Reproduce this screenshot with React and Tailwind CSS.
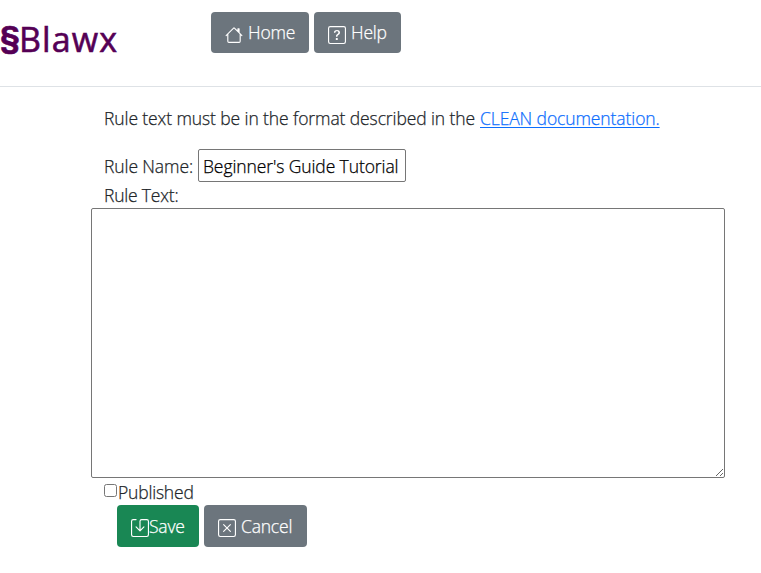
import { BsHouse, BsQuestionSquare, BsSave, BsXSquare } from "react-icons/bs";

const btn = "flex items-center rounded-[4px] text-white pl-[14px] pb-px whitespace-nowrap tracking-[-0.2px]";

export default function App() {
  return (
    <div className="w-[761px] h-[573px] overflow-hidden bg-white font-['Open_Sans','Noto_Sans',sans-serif] text-[17.5px] leading-[26px] text-[#212529] font-light tracking-[-0.1px] [-webkit-text-stroke:0.25px]">
      <header className="flex items-start h-[87px] border-b border-[#dee2e6] pt-[12px]">
        <a className="flex w-[211px] text-[#550055] text-[34px] leading-[54px] whitespace-nowrap">
          <span className="w-[19px] font-['Roboto'] font-bold text-[32px] -mt-[2px] [-webkit-text-stroke:0.6px]">§</span>
          <span className="font-normal tracking-[1.1px] [-webkit-text-stroke:0.6px]">Blawx</span>
        </a>
        <nav className="flex gap-[5px]">
          <button className={`${btn} w-[98px] h-[41px] bg-[#6c757d]`}>
            <BsHouse className="size-[18px] mt-[5px] mr-[5px]" />Home
          </button>
          <button className={`${btn} w-[87px] h-[41px] bg-[#6c757d]`}>
            <BsQuestionSquare className="size-[18px] mt-[5px] mr-[5px]" />Help
          </button>
        </nav>
      </header>
      <main className="pl-[91px] pt-[18px] whitespace-nowrap">
        <p className="flex pl-[13px] mb-[18px]">
          <span className="w-[376px]">Rule text must be in the format described in the</span>
          <a className="text-[#0d6efd] underline underline-offset-[2px] decoration-1">CLEAN documentation.</a>
        </p>
        <div className="flex items-center pl-[13px] h-[33px]">
          <label className="w-[94px]">Rule Name:</label>
          <input className="w-[208px] h-[33px] border border-[#767676] rounded-[2px] px-[4px] text-black" defaultValue="Beginner's Guide Tutorial" />
        </div>
        <label className="block pl-[13px] h-[26px] tracking-[-0.2px]">Rule Text:</label>
        <textarea className="block w-[634px] h-[270px] border border-[#767676] rounded-[2px] resize" />
        <label className="flex items-center pl-[13px] h-[27px] tracking-[-0.2px]">
          <span className="size-[13px] border border-[#767676] rounded-[2.5px] mr-px -mt-[2px]" />Published
        </label>
        <div className="flex gap-[5px] pl-[26px]">
          <button className={`${btn} w-[82px] h-[42px] bg-[#198754]`}>
            <BsSave className="size-[18px] mt-[4px]" />Save
          </button>
          <button className={`${btn} w-[103px] h-[42px] bg-[#6c757d]`}>
            <BsXSquare className="size-[18px] mt-[4px] mr-[5px]" />Cancel
          </button>
        </div>
      </main>
    </div>
  );
}
